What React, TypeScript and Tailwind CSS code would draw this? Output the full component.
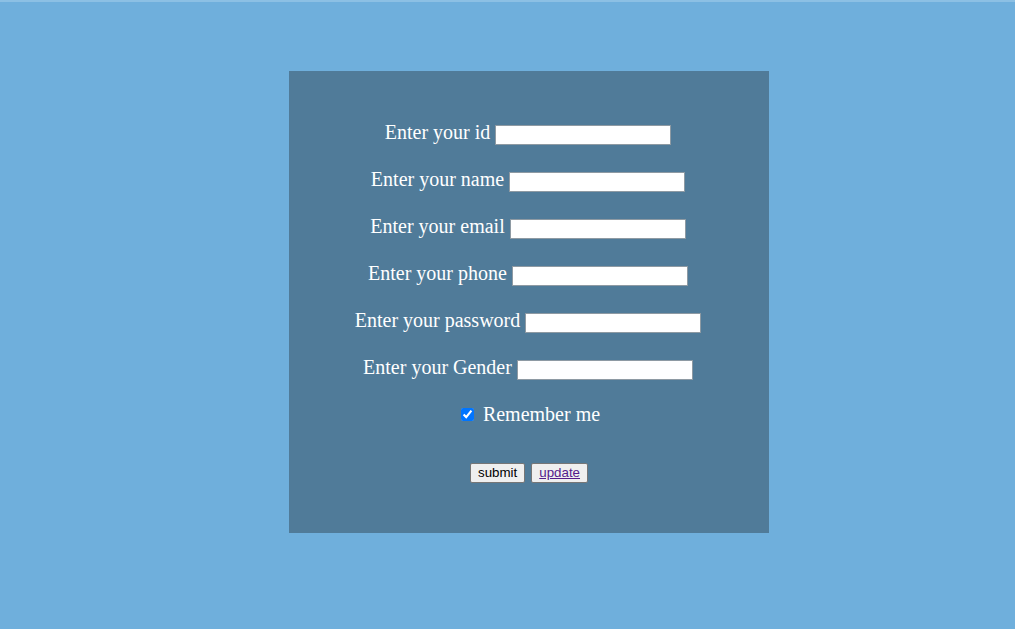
import React from "react";

const rows = [
  "Enter your id",
  "Enter your name",
  "Enter your email",
  "Enter your phone",
  "Enter your password",
  "Enter your Gender",
];

export default function App() {
  return (
    <div className="w-[1015px] h-[629px] bg-[#6fafdc] overflow-hidden" style={{ fontFamily: '"Liberation Serif", "Times New Roman", serif' }}>
      <div className="h-[2px] bg-[#8cc0e4]" />
      <div className="ml-[289px] mt-[69px] w-[480px] h-[462px] bg-[#507b99] flex flex-col items-center pt-[38px]">
        {rows.map((r) => (
          <div key={r} className="h-[47px] flex items-center text-[20px] text-white pr-[2px]">
            <span className="leading-[23px]">{r}</span>
            <input type="text" className="ml-[5px] mt-[5px] w-[176px] h-[20px] bg-white border border-[#8e9aa3] outline-none" />
          </div>
        ))}
        <div className="h-[47px] flex items-center text-[20px] text-white pl-[3px]">
          <input type="checkbox" defaultChecked className="w-[13px] h-[13px] mr-[9px] accent-[#0075ff]" />
          <span className="leading-[23px]">Remember me</span>
        </div>
        <div className="mt-[25px] flex items-center gap-[6px]" style={{ fontFamily: '"Liberation Sans", Arial, sans-serif' }}>
          <button className="h-[20px] px-[7px] bg-[#efefef] border border-[#767676] rounded-[2px] text-[13.33px] text-black leading-none">submit</button>
          <button className="h-[20px] px-[7px] bg-[#efefef] border border-[#767676] rounded-[2px] text-[13.33px] leading-none">
            <a href="#" className="text-[#551a8b] underline">update</a>
          </button>
        </div>
      </div>
    </div>
  );
}
